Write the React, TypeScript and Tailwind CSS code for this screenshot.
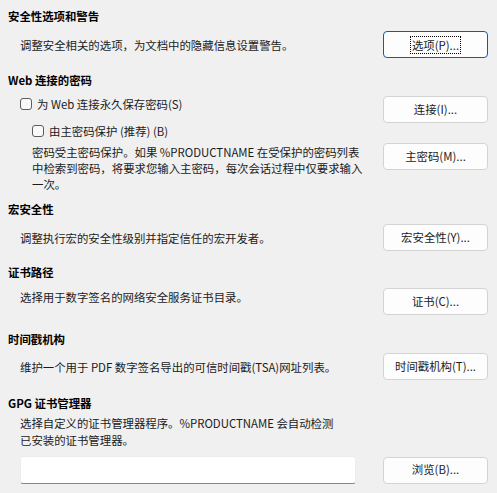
import type { ReactNode } from "react";

const font = "font-['Noto_Sans_CJK_SC','Noto_Sans',sans-serif]";

function Btn({ children, focused }: { children: ReactNode; focused?: boolean }) {
  return (
    <button
      className={
        "w-[105px] h-[27px] shrink-0 rounded-[4px] border flex items-center justify-center text-[11.4px] text-[#1b1b1b] bg-[#fdfdfd] " +
        (focused ? "border-[#005fb8]" : "border-[#d3d3d3]")
      }
    >
      {focused ? (
        <span className="outline outline-1 outline-dotted outline-black px-[1px] leading-[16px]">{children}</span>
      ) : (
        children
      )}
    </button>
  );
}

function Heading({ children, className = "" }: { children: ReactNode; className?: string }) {
  return <div className={"pl-[8px] font-bold text-[11.4px] leading-[16px] text-black " + className}>{children}</div>;
}

function Check({ label }: { label: string }) {
  return (
    <div className="flex items-center gap-[5px] leading-[16px]">
      <span className="w-[12px] h-[12px] rounded-[3px] border border-[#5c5c5c] bg-[#f9f9f9]" />
      <span>{label}</span>
    </div>
  );
}

export default function App() {
  return (
    <div className={"w-[497px] h-[493px] bg-[#f0f0f0] pt-[8px] pr-[9px] text-[11.4px] text-[#1b1b1b] overflow-hidden " + font}>
      <Heading>安全性选项和警告</Heading>
      <div className="flex items-center justify-between mt-[7px] pl-[20px]">
        <span className="leading-[16px]">调整安全相关的选项，为文档中的隐藏信息设置警告。</span>
        <Btn focused>选项(P)...</Btn>
      </div>

      <Heading className="mt-[14px]">Web 连接的密码</Heading>
      <div className="flex items-start justify-between mt-[8px] pl-[20px]">
        <Check label="为 Web 连接永久保存密码(S)" />
        <Btn>连接(I)...</Btn>
      </div>
      <div className="pl-[32px]">
        <Check label="由主密码保护 (推荐) (B)" />
      </div>
      <div className="flex items-start justify-between mt-[4px] pl-[32px]">
        <p className="leading-[16px] mt-[1px]">
          密码受主密码保护。如果 %PRODUCTNAME 在受保护的密码列表
          <br />
          中检索到密码，将要求您输入主密码，每次会话过程中仅要求输入
          <br />
          一次。
        </p>
        <Btn>主密码(M)...</Btn>
      </div>

      <Heading className="mt-[9px]">宏安全性</Heading>
      <div className="flex items-center justify-between mt-[7px] pl-[20px]">
        <span className="leading-[16px]">调整执行宏的安全性级别并指定信任的宏开发者。</span>
        <Btn>宏安全性(Y)...</Btn>
      </div>

      <Heading className="mt-[13px]">证书路径</Heading>
      <div className="flex items-start justify-between mt-[8px] pl-[20px]">
        <span className="leading-[16px] mt-[1px]">选择用于数字签名的网络安全服务证书目录。</span>
        <Btn>证书(C)...</Btn>
      </div>

      <Heading className="mt-[16px]">时间戳机构</Heading>
      <div className="flex items-center justify-between mt-[6px] pl-[20px]">
        <span className="leading-[16px]">维护一个用于 PDF 数字签名导出的可信时间戳(TSA)网址列表。</span>
        <Btn>时间戳机构(T)...</Btn>
      </div>

      <Heading className="mt-[15px]">GPG 证书管理器</Heading>
      <p className="mt-[4px] pl-[20px] leading-[17px]">
        选择自定义的证书管理器程序。%PRODUCTNAME 会自动检测
        <br />
        已安装的证书管理器。
      </p>
      <div className="flex items-center justify-between mt-[7px] pl-[20px]">
        <div className="w-[336px] h-[28px] bg-white rounded-[3px] border border-[#ececec] border-b-[#868686]" />
        <Btn>浏览(B)...</Btn>
      </div>
    </div>
  );
}
